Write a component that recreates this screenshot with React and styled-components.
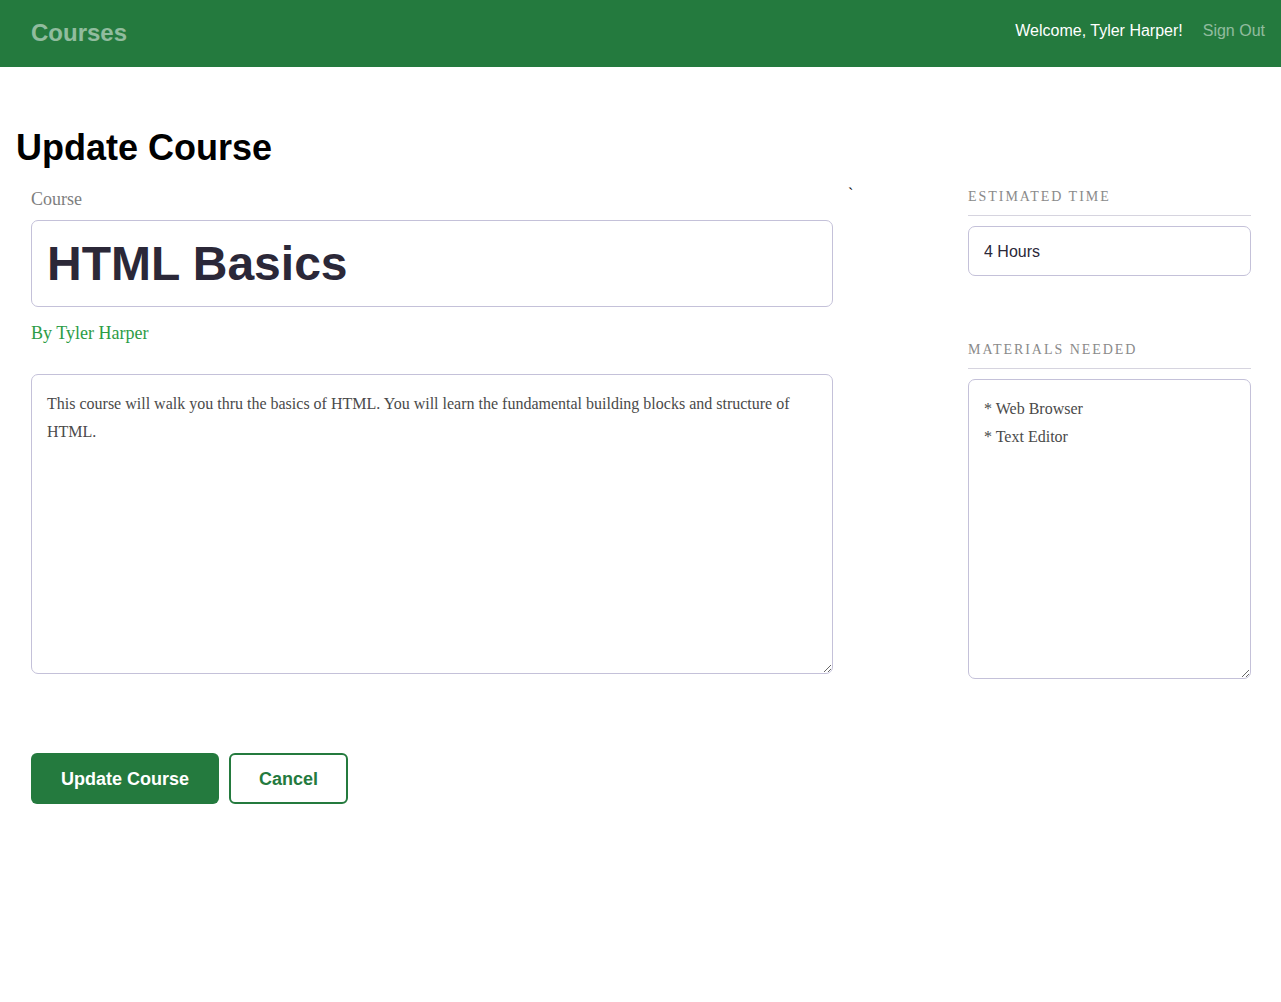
import React from "react";
import styled, { createGlobalStyle } from "styled-components";

const GlobalStyle = createGlobalStyle`
  * { box-sizing: border-box; }
  html, body { margin: 0; padding: 0; background: #ffffff; }
  body { font-family: "Liberation Sans", Arial, sans-serif; }
`;

const GREEN = "#247a3e";
const BORDER = "#c4c1d9";

const Header = styled.header`
  height: 67px;
  background: ${GREEN};
  display: flex;
  align-items: center;
  justify-content: space-between;
  padding: 0 16px 0 31px;
`;

const Logo = styled.h1`
  margin: 0 0 2px;
  font-family: "Liberation Sans", Arial, sans-serif;
  font-size: 24px;
  font-weight: 700;
  line-height: 30px;
  color: rgba(255, 255, 255, 0.5);
`;

const Nav = styled.nav`
  display: flex;
  gap: 20px;
  padding-bottom: 6px;
  font-family: "Liberation Sans", Arial, sans-serif;
  font-size: 16px;
  line-height: 20px;
`;

const NavText = styled.span`
  color: ${(p) => (p.$muted ? "rgba(255,255,255,0.5)" : "#ffffff")};
`;

const Main = styled.main`
  padding: 59px 0 0 0;
`;

const Title = styled.h2`
  margin: 0 0 16px 16px;
  font-family: "Liberation Sans", Arial, sans-serif;
  font-size: 36px;
  font-weight: 700;
  line-height: 44px;
  color: #000;
`;

const Form = styled.form`
  padding: 0 30px 0 31px;
`;

const Grid = styled.div`
  display: grid;
  grid-template-columns: 802px 1fr 283px;
  align-items: start;
`;

const Column = styled.div`
  display: flex;
  flex-direction: column;
`;

const Stray = styled.span`
  padding-left: 15px;
  font-family: "Liberation Serif", "Times New Roman", serif;
  font-size: 16px;
  line-height: 16px;
  color: #000;
`;

const Label = styled.label`
  font-family: "Liberation Serif", "Times New Roman", serif;
  font-size: 18px;
  line-height: 26px;
  color: #7e7e7e;
  margin-bottom: 8px;
`;

const TitleInput = styled.input`
  height: 87px;
  width: 100%;
  border: 1px solid ${BORDER};
  border-radius: 7px;
  padding: 0 15px;
  font-family: "Liberation Sans", Arial, sans-serif;
  font-size: 48px;
  font-weight: 700;
  color: #2b2838;
  outline: none;
`;

const Author = styled.p`
  margin: 14px 0 29px;
  font-family: "Liberation Serif", "Times New Roman", serif;
  font-size: 18px;
  line-height: 24px;
  color: #2d9c46;
`;

const Area = styled.textarea`
  width: 100%;
  height: 300px;
  border: 1px solid ${BORDER};
  border-radius: 7px;
  padding: 15px;
  font-family: "Liberation Serif", "Times New Roman", serif;
  font-size: 16px;
  line-height: 28px;
  color: #4a4a4a;
  outline: none;
  resize: vertical;
  display: block;
`;

const SideHeading = styled.h4`
  margin: 0;
  padding: 1px 0 8px;
  border-bottom: 1px solid #d6d4df;
  font-family: "Liberation Serif", "Times New Roman", serif;
  font-size: 14px;
  font-weight: 400;
  line-height: 20px;
  letter-spacing: 0.14em;
  text-transform: uppercase;
  color: #8a8a8a;
`;

const SideBlock = styled.div`
  display: flex;
  flex-direction: column;
  gap: 10px;
  margin-bottom: ${(p) => p.$mb || 0}px;
`;

const TimeInput = styled.input`
  height: 50px;
  width: 100%;
  border: 1px solid ${BORDER};
  border-radius: 7px;
  padding: 2px 15px 0;
  font-family: "Liberation Sans", Arial, sans-serif;
  font-size: 16px;
  color: #2b2838;
  outline: none;
`;

const Buttons = styled.div`
  display: flex;
  gap: 10px;
  margin-top: 74px;
`;

const Button = styled.button`
  height: 51px;
  padding: 2px ${(p) => (p.$secondary ? 28 : 30)}px 0;
  border-radius: 6px;
  border: ${(p) => (p.$secondary ? `2px solid ${GREEN}` : "none")};
  background: ${(p) => (p.$secondary ? "#ffffff" : GREEN)};
  color: ${(p) => (p.$secondary ? GREEN : "#ffffff")};
  font-family: "Liberation Sans", Arial, sans-serif;
  font-size: 18px;
  font-weight: 700;
  cursor: pointer;
`;

export default function App() {
  return (
    <>
      <GlobalStyle />
      <Header>
        <Logo>Courses</Logo>
        <Nav>
          <NavText>Welcome, Tyler Harper!</NavText>
          <NavText $muted>Sign Out</NavText>
        </Nav>
      </Header>
      <Main>
        <Title>Update Course</Title>
        <Form onSubmit={(e) => e.preventDefault()}>
          <Grid>
            <Column>
              <Label htmlFor="title">Course</Label>
              <TitleInput id="title" defaultValue="HTML Basics" />
              <Author>By Tyler Harper</Author>
              <Area
                defaultValue="This course will walk you thru the basics of HTML. You will learn the fundamental building blocks and structure of HTML."
              />
            </Column>
            <Stray>`</Stray>
            <Column>
              <SideBlock $mb={63}>
                <SideHeading>Estimated Time</SideHeading>
                <TimeInput defaultValue="4 Hours" />
              </SideBlock>
              <SideBlock>
                <SideHeading>Materials Needed</SideHeading>
                <Area defaultValue={"* Web Browser\n* Text Editor"} />
              </SideBlock>
            </Column>
          </Grid>
          <Buttons>
            <Button type="submit">Update Course</Button>
            <Button type="button" $secondary>
              Cancel
            </Button>
          </Buttons>
        </Form>
      </Main>
    </>
  );
}
